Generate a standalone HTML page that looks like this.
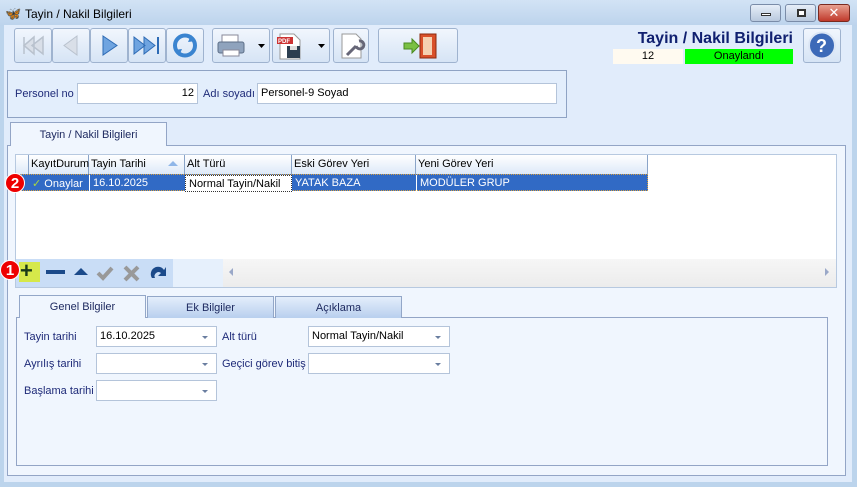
<!DOCTYPE html>
<html><head><meta charset="utf-8"><style>
*{box-sizing:border-box;margin:0;padding:0}
body{width:857px;height:487px;overflow:hidden;background:#bcd4ec;font-family:"Liberation Sans","DejaVu Sans",sans-serif;font-size:11px;color:#000;position:relative}
.a{position:absolute}
.btn{position:absolute;top:28px;height:35px;border:1px solid #9fb3cf;border-radius:3px;background:linear-gradient(#f1f6fd,#d6e4f5)}
.inp{position:absolute;background:#fff;border:1px solid #b4c4da;height:21px;padding:0 3px;line-height:19px;font-size:11px}
.lbl{position:absolute;color:#1e2a78;font-size:11px}
.dd::after{content:"";position:absolute;right:8px;top:9px;border-left:3px solid transparent;border-right:3px solid transparent;border-top:3px solid #6a7ea0}
.th{position:absolute;top:0;height:19px;border-right:1px solid #8aa4c8;padding:3px 2px;background:linear-gradient(#fff,#dde9f8)}
.td{position:absolute;top:0;height:17px;padding:2px 3px;color:#fff}
.tab{position:absolute;height:22px;border:1px solid #93a7c8;border-bottom:none;text-align:center;padding-top:5px;color:#1e2a60;background:linear-gradient(#e4eefb,#b8cfee)}
.badge{position:absolute;width:20px;height:20px;border-radius:50%;background:#e00;border:1px solid #fff;color:#fff;font-weight:bold;font-size:15px;text-align:center;line-height:19px}
</style></head><body>
<div class="a" style="left:0;top:0;width:857px;height:26px;background:linear-gradient(#d2e3f5,#bcd3ec)"></div>
<div class="a" style="left:5px;top:6px;color:#e07a10;font-size:13px">🦋</div>
<div class="a" style="left:25px;top:7px;font-size:12px">Tayin / Nakil Bilgileri</div>
<div class="a" style="left:750px;top:4px;width:31px;height:18px;border:1px solid #7a8ca8;border-radius:3px;background:linear-gradient(#e6eef8,#b9c9de)"><div class="a" style="left:10px;top:8px;width:10px;height:3px;border:1px solid #333;background:#fff"></div></div>
<div class="a" style="left:785px;top:4px;width:31px;height:18px;border:1px solid #7a8ca8;border-radius:3px;background:linear-gradient(#e6eef8,#b9c9de)"><div class="a" style="left:11px;top:4px;width:9px;height:8px;border:2px solid #333;background:#fff"></div></div>
<div class="a" style="left:818px;top:4px;width:32px;height:18px;border:1px solid #7a2a20;border-radius:3px;background:linear-gradient(#e8a090,#c0392b);color:#fff;font-weight:bold;text-align:center;font-size:13px;line-height:16px">✕</div>
<div class="a" style="left:4px;top:25px;width:848px;height:457px;background:#e1ecfb"></div>
<div class="btn" style="left:14px;width:38px"><svg width="36" height="33"><path d="M9 8v17M28 8L17 16.5 28 25zM19 8L9 16.5 19 25z" fill="#d9dfe8" stroke="#b9c2ce" stroke-width="1.5"/></svg></div>
<div class="btn" style="left:52px;width:38px"><svg width="36" height="33"><path d="M24 7L11 16.5 24 26z" fill="#d9dfe8" stroke="#b9c2ce"/></svg></div>
<div class="btn" style="left:90px;width:38px"><svg width="36" height="33"><path d="M12 7L26 16.5 12 26z" fill="#6fa4e0" stroke="#2e6bb5"/></svg></div>
<div class="btn" style="left:128px;width:38px"><svg width="36" height="33"><path d="M5 8L16 16.5 5 25zM15 8L26 16.5 15 25z" fill="#6fa4e0" stroke="#2e6bb5"/><path d="M29 8v17" stroke="#2e6bb5" stroke-width="2"/></svg></div>
<div class="btn" style="left:166px;width:38px"><svg width="36" height="33"><circle cx="18" cy="16.5" r="10" fill="none" stroke="#3a84d0" stroke-width="4"/><path d="M24 6l5 6-8 1zM12 27l-5-6 8-1z" fill="#3a84d0"/></svg></div>
<div class="btn" style="left:212px;width:58px"><svg width="56" height="33"><rect x="9" y="6" width="16" height="8" fill="#fff" stroke="#889"/><rect x="5" y="13" width="26" height="11" rx="2" fill="#8fa3bd" stroke="#5d6f88"/><rect x="10" y="21" width="16" height="6" fill="#fff" stroke="#889"/><path d="M45 15h7l-3.5 4z" fill="#000"/></svg></div>
<div class="btn" style="left:272px;width:58px"><svg width="56" height="33"><path d="M7 5h14l6 6v19H7z" fill="#fff" stroke="#999"/><rect x="4" y="8" width="16" height="7" fill="#c33"/><text x="5" y="14" font-size="6" fill="#fff" font-family="Liberation Sans" font-weight="bold">PDF</text><rect x="14" y="17" width="13" height="12" fill="#2c3e50"/><rect x="17" y="17" width="7" height="4" fill="#ddd"/><path d="M45 15h7l-3.5 4z" fill="#000"/></svg></div>
<div class="btn" style="left:333px;width:36px"><svg width="34" height="33"><path d="M8 5h14l5 5v19H8z" fill="#fff" stroke="#999"/><path d="M13 26l9-9m0 0a4 4 0 1 0 3-5" stroke="#667" stroke-width="3" fill="none"/></svg></div>
<div class="btn" style="left:378px;width:80px"><svg width="78" height="33"><rect x="41" y="5" width="16" height="24" fill="#d9502a" stroke="#8a2a10"/><rect x="44" y="8" width="9" height="18" fill="#f5d0b0"/><path d="M25 14h8v-4l7 7-7 7v-4h-8z" fill="#7ac043" stroke="#4a8a20"/></svg></div>
<div class="a" style="left:600px;top:30px;width:193px;text-align:right;color:#102070;font-weight:bold;font-size:16px">Tayin / Nakil Bilgileri</div>
<div class="a" style="left:613px;top:49px;width:70px;height:15px;background:#fffaf0;text-align:center;font-size:11px;line-height:15px">12</div>
<div class="a" style="left:685px;top:49px;width:108px;height:15px;background:#00ff00;text-align:center;font-size:11px;line-height:15px">Onaylandı</div>
<div class="btn" style="left:803px;width:38px"><svg width="36" height="33"><circle cx="18" cy="16.5" r="13" fill="#3d6ab8" stroke="#dce6f5" stroke-width="2"/><text x="12" y="23" font-size="18" fill="#fff" font-weight="bold" font-family="Liberation Sans">?</text></svg></div>
<div class="a" style="left:7px;top:70px;width:560px;height:48px;border:1px solid #8fa3c4;background:#e3eefc"></div>
<div class="lbl" style="left:15px;top:88px">Personel no</div>
<div class="inp" style="left:77px;top:83px;width:121px;text-align:right">12</div>
<div class="lbl" style="left:203px;top:88px">Adı soyadı</div>
<div class="inp" style="left:257px;top:83px;width:300px">Personel-9 Soyad</div>
<div class="a" style="left:7px;top:145px;width:839px;height:331px;border:1px solid #93a5c6;background:#f0f6fe"></div>
<div class="a" style="left:10px;top:122px;width:157px;height:24px;border:1px solid #93a5c6;border-bottom:none;background:#f0f6fe;text-align:center;padding-top:6px;color:#1e2a60">Tayin / Nakil Bilgileri</div>
<div class="a" style="left:15px;top:154px;width:822px;height:134px;border:1px solid #b7c9e0;background:#fff"></div>
<div class="a" style="left:16px;top:155px;height:19px;width:632px">
<div class="th" style="left:0;width:13px"></div>
<div class="th" style="left:13px;width:60px">KayıtDurum</div>
<div class="th" style="left:73px;width:96px">Tayin Tarihi<span style="position:absolute;right:6px;top:6px;border-left:5px solid transparent;border-right:5px solid transparent;border-bottom:5px solid #8fb6e8"></span></div>
<div class="th" style="left:169px;width:107px">Alt Türü</div>
<div class="th" style="left:276px;width:124px">Eski Görev Yeri</div>
<div class="th" style="left:400px;width:232px">Yeni Görev Yeri</div>
</div>
<div class="a" style="left:16px;top:174px;height:17px;width:632px;background:#316ac5;border:1px dotted #d8a040">
<div class="td" style="left:12px;width:60px"><span style="color:#a8d840">✓</span> Onaylar</div>
<div class="td" style="left:72px;width:96px;border-left:1px solid #fff">16.10.2025</div>
<div class="td" style="left:168px;width:107px;background:#fff;color:#000;border:1px dotted #333">Normal Tayin/Nakil</div>
<div class="td" style="left:275px;width:124px">YATAK BAZA</div>
<div class="td" style="left:399px;width:232px;border-left:1px solid #fff">MODÜLER GRUP</div>
</div>
<div class="a" style="left:16px;top:259px;width:207px;height:28px;background:#e6f0fc"></div>
<div class="a" style="left:16px;top:259px;width:157px;height:28px;background:#c9ddf6"></div>
<div class="a" style="left:19px;top:262px;width:21px;height:20px;background:#d6e84a"></div>
<div class="a" style="left:20px;top:258px;font-size:22px;font-weight:bold;color:#1a3a18">+</div>
<div class="a" style="left:46px;top:270px;width:19px;height:4px;background:#1b4a8a"></div>
<svg class="a" style="left:72px;top:264px" width="100" height="18"><path d="M2 11L9 4 16 11z" fill="#1b4a8a"/><path d="M26 9l5 5 9-10" stroke="#999" stroke-width="4" fill="none"/><path d="M53 3l13 13M66 3L53 16" stroke="#999" stroke-width="4"/><path d="M80 14a7 7 0 0 1 12-8l2-3v9h-8l3-3a4 4 0 0 0-6 5z" fill="#1b4a8a"/></svg>
<div class="a" style="left:223px;top:259px;width:613px;height:28px;background:linear-gradient(#f6f6f6,#ececec)"></div>
<div class="a" style="left:229px;top:268px;border-top:4px solid transparent;border-bottom:4px solid transparent;border-right:4px solid #9aa8c8"></div>
<div class="a" style="left:825px;top:268px;border-top:4px solid transparent;border-bottom:4px solid transparent;border-left:4px solid #9aa8c8"></div>
<div class="badge" style="left:5px;top:173px">2</div>
<div class="badge" style="left:0;top:260px">1</div>
<div class="a" style="left:16px;top:317px;width:812px;height:149px;border:1px solid #93a5c6;background:#f0f6fe"></div>
<div class="tab" style="left:19px;top:295px;width:127px;height:23px;background:#f0f6fe">Genel Bilgiler</div>
<div class="tab" style="left:147px;top:296px;width:127px">Ek Bilgiler</div>
<div class="tab" style="left:275px;top:296px;width:127px">Açıklama</div>
<div class="lbl" style="left:24px;top:331px">Tayin tarihi</div>
<div class="inp dd" style="left:96px;top:326px;width:121px">16.10.2025</div>
<div class="lbl" style="left:222px;top:331px">Alt türü</div>
<div class="inp dd" style="left:308px;top:326px;width:142px">Normal Tayin/Nakil</div>
<div class="lbl" style="left:24px;top:358px">Ayrılış tarihi</div>
<div class="inp dd" style="left:96px;top:353px;width:121px"></div>
<div class="lbl" style="left:222px;top:358px">Geçici görev bitiş</div>
<div class="inp dd" style="left:308px;top:353px;width:142px"></div>
<div class="lbl" style="left:24px;top:385px">Başlama tarihi</div>
<div class="inp dd" style="left:96px;top:380px;width:121px"></div>
</body></html>
